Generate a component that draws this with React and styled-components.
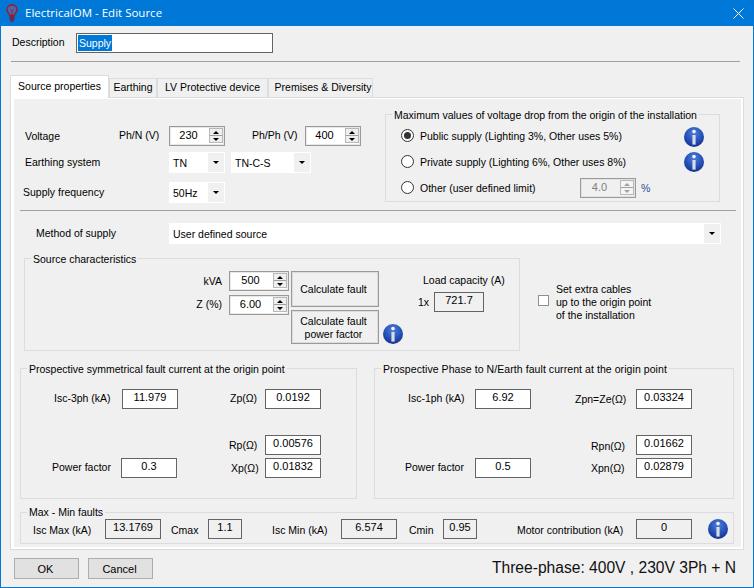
import styled, { createGlobalStyle, css } from 'styled-components';

const GlobalStyle = createGlobalStyle`
  html, body {
    margin: 0;
    padding: 0;
    background: #f0f0f0;
  }
`;

const place = css`
  position: absolute;
  left: ${(p) => p.$x}px;
  top: ${(p) => p.$y}px;
  width: ${(p) => (p.$w ? `${p.$w}px` : 'auto')};
  height: ${(p) => (p.$h ? `${p.$h}px` : 'auto')};
  box-sizing: border-box;
`;

const Window = styled.div`
  position: relative;
  width: 754px;
  height: 588px;
  overflow: hidden;
  box-sizing: border-box;
  background: #f0f0f0;
  border: 1px solid #0078d7;
  border-top: none;
  font-family: "Liberation Sans", Arial, sans-serif;
  font-size: 10.5px;
  color: #000;
`;

const TitleBar = styled.div`
  position: absolute;
  left: -1px;
  top: 0;
  width: 754px;
  height: 26px;
  background: #0078d7;
  color: #fff;
  font-family: "Open Sans", "Liberation Sans", sans-serif;
  font-size: 11.5px;
  line-height: 26px;
`;

const TitleText = styled.span`
  position: absolute;
  left: 25px;
  top: 0;
  white-space: nowrap;
`;

const Glyph = styled.svg`
  ${place}
  display: block;
`;

const Label = styled.span`
  position: absolute;
  left: ${(p) => p.$x - 1}px;
  top: ${(p) => p.$y - 8}px;
  height: 16px;
  line-height: 16px;
  white-space: nowrap;
  color: ${(p) => p.$color || '#000'};
`;

const RightLabel = styled.span`
  position: absolute;
  right: ${(p) => 754 - p.$x}px;
  top: ${(p) => p.$y - 8}px;
  height: 16px;
  line-height: 16px;
  white-space: nowrap;
`;

const DescInput = styled.div`
  ${place}
  background: #fff;
  border: 1px solid #646464;
  padding: 1px 1px;
  line-height: 16px;
`;

const Selected = styled.span`
  display: inline-block;
  background: #0078d7;
  color: #fff;
  padding: 0 1px;
  height: 16px;
`;

const Rule = styled.div`
  ${place}
  height: 1px;
  background: #a0a0a0;
`;

const Tab = styled.div`
  ${place}
  background: ${(p) => (p.$active ? '#fff' : '#f0f0f0')};
  border: 1px solid #dcdcdc;
  border-bottom: ${(p) => (p.$active ? 'none' : '1px solid #dcdcdc')};
  padding-left: ${(p) => p.$shift || 0}px;
  text-align: center;
  line-height: ${(p) => p.$h - 3}px;
  white-space: nowrap;
  z-index: ${(p) => (p.$active ? 2 : 0)};
`;

const TabPanel = styled.div`
  ${place}
  background: #f0f0f0;
  border: 1px solid #dcdcdc;
  box-shadow: inset 3px 0 0 #fff, inset -2px 0 0 #fff, inset 0 -2px 0 #fff, inset 0 1px 0 #fff;
`;

const Group = styled.div`
  ${place}
  border: 1px solid #dcdcdc;
`;

const Legend = styled.span`
  position: absolute;
  left: ${(p) => p.$x - 3}px;
  top: ${(p) => p.$y - 8}px;
  height: 16px;
  padding: 0 2px;
  line-height: 16px;
  letter-spacing: ${(p) => p.$track || 0}px;
  white-space: nowrap;
  background: #f0f0f0;
`;

const SpinBox = styled.div`
  ${place}
  background: ${(p) => (p.$disabled ? '#f0f0f0' : '#fff')};
  color: ${(p) => (p.$disabled ? '#7f7f7f' : '#000')};
  border: 1px solid #9a9a9a;
  box-shadow: inset 0 0 0 1px ${(p) => (p.$disabled ? '#e2e2e2' : '#e8e8e8')};
  font-size: 11px;
  text-align: center;
  line-height: ${(p) => p.$h - 4}px;
  padding-right: 17px;
`;

const SpinButtons = styled.div`
  position: absolute;
  right: 1px;
  top: 1px;
  bottom: 2px;
  width: 14px;
  display: flex;
  flex-direction: column;
  gap: 1px;
  background: #a0a0a0;
  border: 1px solid #b8b8b8;
  box-sizing: border-box;
`;

const SpinArrow = styled.div`
  flex: 1;
  background: ${(p) => (p.$disabled ? '#f4f4f4' : '#efefef')};
  display: flex;
  align-items: center;
  justify-content: center;

  &::after {
    content: '';
    border-left: 3px solid transparent;
    border-right: 3px solid transparent;
    ${(p) => (p.$up ? 'border-bottom' : 'border-top')}: 3px solid ${(p) => (p.$disabled ? '#a0a0a0' : '#000')};
  }
`;

const Combo = styled.div`
  ${place}
  background: #fff;
  font-size: 10.5px;
  line-height: ${(p) => p.$h + 1}px;
  padding-left: 4px;
`;

const ComboButton = styled.div`
  position: absolute;
  right: 1px;
  top: 1px;
  bottom: 1px;
  width: 16px;
  background: #f0f0f0;
  display: flex;
  align-items: center;
  justify-content: center;

  &::after {
    content: '';
    border-left: 3px solid transparent;
    border-right: 3px solid transparent;
    border-top: 3px solid #000;
  }
`;

const RadioMark = styled.div`
  ${place}
  width: 13px;
  height: 13px;
  border-radius: 50%;
  background: #fff;
  border: 1px solid #333;

  &::after {
    content: '';
    display: ${(p) => (p.$on ? 'block' : 'none')};
    width: 7px;
    height: 7px;
    margin: 2px;
    border-radius: 50%;
    background: #333;
  }
`;

const CheckMark = styled.div`
  ${place}
  width: 11px;
  height: 11px;
  background: #fff;
  border: 1px solid #8f8f8f;
`;

const CheckText = styled.div`
  ${place}
  line-height: 13px;
  white-space: nowrap;
`;

const ValueBox = styled.div`
  ${place}
  border: 1px solid #646464;
  background: ${(p) => (p.$gray ? '#f0f0f0' : '#fff')};
  font-size: 11px;
  text-align: center;
  line-height: ${(p) => p.$h - 6}px;
`;

const ActionButton = styled.div`
  ${place}
  display: flex;
  align-items: center;
  justify-content: center;
  padding: 1px 3px 0 0;
  text-align: center;
  line-height: 13px;
  background: #f0f0f0;
  border: 1px solid #9a9a9a;
  box-shadow: inset 0 0 0 1px #dcdcdc;
`;

const DialogButton = styled.div`
  ${place}
  display: flex;
  align-items: center;
  justify-content: center;
  padding-right: 2px;
  font-size: 11px;
  background: #e1e1e1;
  border: 1px solid #adadad;
`;

const StatusText = styled.span`
  position: absolute;
  right: 17px;
  top: 559px;
  font-size: 15.6px;
  line-height: 18px;
  white-space: nowrap;
  color: #111;
`;

function BulbIcon() {
  return (
    <Glyph $x={6} $y={4} $w={12} $h={18} viewBox="0 0 12 18" fill="none" stroke="#a01828" strokeWidth="1.3">
      <path d="M3.7 11.5C3 9 1 8 1 5.5 1 2.8 3.2 1 6 1s5 1.8 5 4.5C11 8 9 9 8.3 11.5Z" fill="#d0485a" fillOpacity="0.35" />
      <path d="M6 11V6M4.5 5.5 6 7l1.5-1.5" strokeWidth="0.8" />
      <path d="M3.5 13h5M3.5 15h5M4.5 17h3" stroke="#8c1020" />
    </Glyph>
  );
}

function CloseIcon() {
  return (
    <Glyph $x={733} $y={8} $w={11} $h={11} viewBox="0 0 11 11" stroke="#fff" strokeWidth="1">
      <path d="M.5.5l10 10M10.5.5l-10 10" />
    </Glyph>
  );
}

function InfoIcon({ cx, cy }) {
  const id = `info-${cx}-${cy}`;
  return (
    <Glyph $x={cx - 10} $y={cy - 10} $w={20} $h={20} viewBox="0 0 20 20">
      <defs>
        <radialGradient id={id} cx="50%" cy="30%" r="72%">
          <stop offset="0%" stopColor="#4f7fd8" />
          <stop offset="60%" stopColor="#2450b8" />
          <stop offset="100%" stopColor="#12308c" />
        </radialGradient>
      </defs>
      <circle cx="10" cy="10" r="10" fill={`url(#${id})`} />
      <circle cx="10" cy="4.6" r="1.8" fill="#f4f4f8" />
      <path d="M8.4 8h3.2v9.6H8.4z" fill="#d9dbe6" />
    </Glyph>
  );
}

function Spinner({ x, y, w = 56, h = 20, value, disabled }) {
  return (
    <SpinBox $x={x} $y={y} $w={w} $h={h} $disabled={disabled}>
      {value}
      <SpinButtons>
        <SpinArrow $up $disabled={disabled} />
        <SpinArrow $disabled={disabled} />
      </SpinButtons>
    </SpinBox>
  );
}

function Select({ x, y, w, children }) {
  return (
    <Combo $x={x} $y={y} $w={w} $h={21}>
      {children}
      <ComboButton />
    </Combo>
  );
}

const faultBoxes = [
  { x: 54, y: 398, label: 'Isc-3ph (kA)', bx: 122, by: 389, value: '11.979' },
  { x: 230, y: 398, label: 'Zp(Ω)', bx: 265, by: 389, value: '0.0192' },
  { x: 229, y: 445, label: 'Rp(Ω)', bx: 265, by: 435, value: '0.00576' },
  { x: 231, y: 468, label: 'Xp(Ω)', bx: 265, by: 458, value: '0.01832' },
  { x: 52, y: 467, label: 'Power factor', bx: 121, by: 458, value: '0.3' },
  { x: 408, y: 398, label: 'Isc-1ph (kA)', bx: 475, by: 389, value: '6.92' },
  { x: 575, y: 399, label: 'Zpn=Ze(Ω)', bx: 636, by: 389, value: '0.03324' },
  { x: 591, y: 446, label: 'Rpn(Ω)', bx: 636, by: 435, value: '0.01662' },
  { x: 591, y: 468, label: 'Xpn(Ω)', bx: 636, by: 458, value: '0.02879' },
  { x: 405, y: 467, label: 'Power factor', bx: 475, by: 458, value: '0.5' },
];

const minMaxBoxes = [
  { x: 33, label: 'Isc Max (kA)', bx: 105, w: 56, value: '13.1769' },
  { x: 171, label: 'Cmax', bx: 208, w: 34, value: '1.1' },
  { x: 272, label: 'Isc Min (kA)', bx: 341, w: 56, value: '6.574' },
  { x: 409, label: 'Cmin', bx: 443, w: 34, value: '0.95' },
  { x: 517, label: 'Motor contribution (kA)', bx: 636, w: 56, value: '0' },
];

const tabs = [
  { x: 10, y: 75, w: 99, h: 23, label: 'Source properties', active: true },
  { x: 109, y: 78, w: 48, h: 20, label: 'Earthing' },
  { x: 157, y: 78, w: 111, h: 20, label: 'LV Protective device' },
  { x: 268, y: 78, w: 105, h: 20, label: 'Premises & Diversity', shift: 5 },
];

// everything sits one pixel left of the screenshot because of the window border
export default function App() {
  return (
    <>
      <GlobalStyle />
      <Window>
        <TitleBar>
          <BulbIcon />
          <TitleText>ElectricalOM - Edit Source</TitleText>
          <CloseIcon />
        </TitleBar>

        <Label $x={12} $y={42}>Description</Label>
        <DescInput $x={75} $y={33} $w={197} $h={20}>
          <Selected>Supply</Selected>
        </DescInput>
        <Rule $x={10} $y={61} $w={729} />

        <TabPanel $x={9} $y={97} $w={734} $h={453} />
        {tabs.map((t) => (
          <Tab key={t.label} $x={t.x - 1} $y={t.y} $w={t.w} $h={t.h} $active={t.active} $shift={t.shift}>
            {t.label}
          </Tab>
        ))}

        <Label $x={25} $y={136}>Voltage</Label>
        <Label $x={119} $y={135}>Ph/N (V)</Label>
        <Spinner x={168} y={126} value="230" />
        <Label $x={252} $y={135}>Ph/Ph (V)</Label>
        <Spinner x={304} y={126} value="400" />

        <Label $x={25} $y={162}>Earthing system</Label>
        <Select x={168} y={152} w={56}>TN</Select>
        <Select x={230} y={152} w={80}>TN-C-S</Select>
        <Label $x={23} $y={192}>Supply frequency</Label>
        <Select x={168} y={182} w={56}>50Hz</Select>

        <Group $x={384} $y={114} $w={335} $h={88} />
        <Legend $x={394} $y={115}>Maximum values of voltage drop from the origin of the installation</Legend>
        <RadioMark $x={400} $y={129} $on />
        <Label $x={420} $y={136}>Public supply (Lighting 3%, Other uses 5%)</Label>
        <InfoIcon cx={693} cy={137} />
        <RadioMark $x={400} $y={155} />
        <Label $x={420} $y={162}>Private supply (Lighting 6%, Other uses 8%)</Label>
        <InfoIcon cx={693} cy={162} />
        <RadioMark $x={400} $y={181} />
        <Label $x={420} $y={188}>Other (user defined limit)</Label>
        <Spinner x={579} y={178} value="4.0" disabled />
        <Label $x={641} $y={188} $color="#1f4f8f">%</Label>

        <Rule $x={19} $y={210} $w={716} />

        <Label $x={36} $y={233}>Method of supply</Label>
        <Select x={168} y={223} w={552}>User defined source</Select>

        <Group $x={23} $y={258} $w={496} $h={93} />
        <Legend $x={33} $y={259}>Source characteristics</Legend>
        <RightLabel $x={223} $y={281}>kVA</RightLabel>
        <Spinner x={228} y={271} w={60} value="500" />
        <RightLabel $x={223} $y={304}>Z (%)</RightLabel>
        <Spinner x={228} y={295} w={60} value="6.00" />
        <ActionButton $x={290} $y={271} $w={88} $h={36}>Calculate fault</ActionButton>
        <ActionButton $x={290} $y={310} $w={88} $h={34}>Calculate fault<br />power factor</ActionButton>
        <InfoIcon cx={392} cy={334} />
        <Label $x={423} $y={280}>Load capacity (A)</Label>
        <Label $x={418} $y={302}>1x</Label>
        <ValueBox $x={433} $y={292} $w={50} $h={20} $gray>721.7</ValueBox>
        <CheckMark $x={537} $y={295} />
        <CheckText $x={555} $y={283}>Set extra cables<br />up to the origin point<br />of the installation</CheckText>

        <Group $x={19} $y={368} $w={337} $h={131} />
        <Legend $x={29} $y={369}>Prospective symmetrical fault current at the origin point</Legend>
        <Group $x={373} $y={368} $w={360} $h={131} />
        <Legend $x={383} $y={369} $track={0.07}>Prospective Phase to N/Earth fault current at the origin point</Legend>
        {faultBoxes.map((f) => (
          <span key={f.label + f.bx}>
            <Label $x={f.x} $y={f.y}>{f.label}</Label>
            <ValueBox $x={f.bx - 1} $y={f.by} $w={56} $h={20}>{f.value}</ValueBox>
          </span>
        ))}

        <Group $x={19} $y={512} $w={714} $h={32} />
        <Legend $x={29} $y={512}>Max - Min faults</Legend>
        {minMaxBoxes.map((f) => (
          <span key={f.label}>
            <Label $x={f.x} $y={530}>{f.label}</Label>
            <ValueBox $x={f.bx - 1} $y={519} $w={f.w} $h={20} $gray>{f.value}</ValueBox>
          </span>
        ))}
        <InfoIcon cx={717} cy={529} />

        <DialogButton $x={13} $y={558} $w={65} $h={21}>OK</DialogButton>
        <DialogButton $x={87} $y={558} $w={65} $h={21}>Cancel</DialogButton>
        <StatusText>Three-phase: 400V , 230V 3Ph + N</StatusText>
      </Window>
    </>
  );
}
